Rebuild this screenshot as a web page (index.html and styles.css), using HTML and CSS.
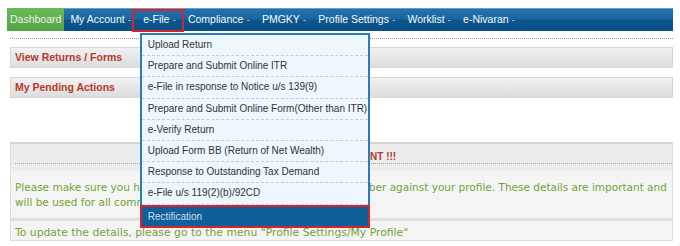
FILE: index.html
```html
<!DOCTYPE html>
<html>
<head>
<meta charset="utf-8">
<link rel="stylesheet" href="styles.css">
</head>
<body>
<div class="page">
  <ul class="nav">
    <li class="nav-item dash">Dashboard</li>
    <li class="nav-item">My Account<span class="arr">-</span></li>
    <li class="nav-item efile">e-File<span class="arr">-</span>
      <ul class="menu">
        <li>Upload Return</li>
        <li>Prepare and Submit Online ITR</li>
        <li>e-File in response to Notice u/s 139(9)</li>
        <li>Prepare and Submit Online Form(Other than ITR)</li>
        <li>e-Verify Return</li>
        <li>Upload Form BB (Return of Net Wealth)</li>
        <li>Response to Outstanding Tax Demand</li>
        <li>e-File u/s 119(2)(b)/92CD</li>
        <li class="active">Rectification</li>
      </ul>
    </li>
    <li class="nav-item">Compliance<span class="arr">-</span></li>
    <li class="nav-item">PMGKY<span class="arr">-</span></li>
    <li class="nav-item">Profile Settings<span class="arr">-</span></li>
    <li class="nav-item">Worklist<span class="arr">-</span></li>
    <li class="nav-item">e-Nivaran<span class="arr">-</span></li>
  </ul>
  <div class="content">
    <div class="dots"></div>
    <div class="panel">View Returns / Forms</div>
    <div class="panel">My Pending Actions</div>
    <div class="notice">
      <div class="notice-head"><div class="notice-title">NOTE: IMPORTANT !!!</div></div>
      <div class="notice-body">
        <p class="line">Please make sure you have updated your Email ID and Mobile Number against your profile. These details are important and</p>
        <p class="line">will be used for all communications.</p>
      </div>
      <div class="notice-row">To update the details, please go to the menu "Profile Settings/My Profile"</div>
    </div>
    <div class="after">Kindly ignore this if details are already updated, valid and verified by the taxpayer.</div>
  </div>
</div>
</body>
</html>
```
FILE: styles.css
```css
* { box-sizing: border-box; }
html, body { margin: 0; padding: 0; }
body {
  font-family: "Liberation Sans", Arial, sans-serif;
  background: #fff;
  height: 246px;
  overflow: hidden;
}
.page { padding: 8px 7px 0; }

.nav {
  display: flex;
  list-style: none;
  margin: 0;
  padding: 0;
  height: 23px;
  background: linear-gradient(#2673ac 0%, #1867a2 48%, #0c568e 52%, #0a4f86 100%);
  box-shadow: inset 0 1px 0 #6d9cc4;
}
.nav-item {
  position: relative;
  padding: 0 6px;
  color: #f6f9fc;
  font-size: 10.5px;
  line-height: 23px;
  white-space: nowrap;
}
.dash {
  padding: 0 3px;
  background: linear-gradient(#6dba59, #52a343);
  color: #eaf5e6;
}
.arr { margin-left: 3px; color: #a6bfd5; }

.efile::after {
  content: "";
  position: absolute;
  left: -5px;
  right: -2px;
  top: 1px;
  bottom: -1px;
  border: 2px solid #d6222b;
  pointer-events: none;
}

.menu {
  position: absolute;
  left: 2.5px;
  top: 25px;
  width: 230px;
  margin: 0;
  padding: 0;
  list-style: none;
  background: #eef7fd;
  border: 2px solid #2a7bbd;
  z-index: 5;
}
.menu li {
  height: 21.2px;
  line-height: 20px;
  padding-left: 6px;
  border-bottom: 1px dashed #c7ccd0;
  color: #333;
  font-size: 10px;
}
.menu li.active {
  height: 23px;
  line-height: 19px;
  margin: 0 -2px -2px;
  padding-left: 6px;
  background: #105f98;
  color: #c9dfef;
  border: 2px solid #d6232d;
}

.content { margin-left: 3px; }
.dots { margin-top: 7px; border-top: 1px dotted #9c9c9c; }
.panel {
  margin-top: 8px;
  height: 21px;
  border: 1px solid #d6d6d6;
  background: linear-gradient(#f1f1f1, #dddddd);
  color: #b33a2b;
  font-weight: bold;
  font-size: 10.5px;
  line-height: 19px;
  padding-left: 4px;
}
.panel + .panel { margin-top: 9px; }

.notice {
  margin-top: 44px;
  border: 1px solid #dcdcdc;
  border-top: 2px solid #d3d3d3;
  background: #f4f4f4;
}
.notice-head {
  height: 27px;
  padding: 7px 0 0 4px;
  background: #ececec;
}
.notice-title {
  text-align: center;
  font-weight: bold;
  font-size: 10px;
  line-height: 12px;
  color: #b33a2b;
  border-bottom: 1px dotted #9c9c9c;
}
.notice-body {
  padding: 9px 0 8px 4px;
  font-family: "DejaVu Sans", sans-serif;
  font-size: 10.5px;
  line-height: 15px;
  color: #74a236;
  white-space: nowrap;
  overflow: hidden;
}
.line { margin: 0; }
.notice-row {
  height: 22px;
  border-top: 3px solid #e0e0e0;
  padding: 4px 0 0 4px;
  font-family: "DejaVu Sans", sans-serif;
  font-size: 10.8px;
  line-height: 15px;
  color: #74a236;
  white-space: nowrap;
  overflow: hidden;
}
.after {
  margin-top: 4px;
  padding-left: 4px;
  font-family: "DejaVu Sans", sans-serif;
  font-size: 10.5px;
  line-height: 15px;
  color: #9a9a9a;
  white-space: nowrap;
}
```
